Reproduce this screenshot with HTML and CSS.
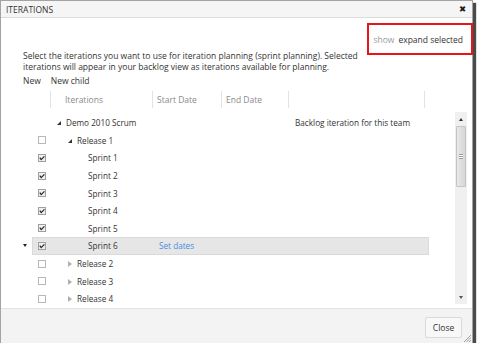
FILE: index.html
```html
<!DOCTYPE html>
<html>
    <head>
        <meta name="viewport" content="width=device-width, initial-scale=1">
        <link rel="stylesheet" href="styles.css">
    </head>
    <body>
        <div class="dialog">
            <div class="titlebar">
                <span class="title">ITERATIONS</span>
                <span class="close-x">&#x2716;</span>
            </div>
            <div class="content">
                <div class="toolbar">
                    <span class="show-label">show</span>
                    <span class="show-value">expand selected</span>
                </div>
                <p class="intro">Select the iterations you want to use for iteration planning (sprint planning). Selected<br>iterations will appear in your backlog view as iterations available for planning.</p>
                <div class="menu">
                    <span>New</span>
                    <span>New child</span>
                </div>
                <div class="grid-head">
                    <div class="hcell c-ind"></div>
                    <div class="hcell c-chk"></div>
                    <div class="hcell c-iter">Iterations</div>
                    <div class="hcell c-start">Start Date</div>
                    <div class="hcell c-end">End Date</div>
                    <div class="hcell c-extra"></div>
                </div>
                <div class="grid-body">
                    <div class="rows">
                        <div class="row">
                            <div class="c-ind"></div>
                            <div class="row-inner">
                                <div class="c-chk"></div>
                                <div class="c-iter lvl0"><span class="tri open"></span>Demo 2010 Scrum</div>
                                <div class="c-start"></div>
                                <div class="c-end"></div>
                                <div class="c-extra">Backlog iteration for this team</div>
                            </div>
                        </div>
                        <div class="row">
                            <div class="c-ind"></div>
                            <div class="row-inner">
                                <div class="c-chk"><span class="box"></span></div>
                                <div class="c-iter lvl1"><span class="tri open"></span>Release 1</div>
                                <div class="c-start"></div>
                                <div class="c-end"></div>
                                <div class="c-extra"></div>
                            </div>
                        </div>
                        <div class="row">
                            <div class="c-ind"></div>
                            <div class="row-inner">
                                <div class="c-chk"><span class="box checked"></span></div>
                                <div class="c-iter lvl2">Sprint 1</div>
                                <div class="c-start"></div>
                                <div class="c-end"></div>
                                <div class="c-extra"></div>
                            </div>
                        </div>
                        <div class="row">
                            <div class="c-ind"></div>
                            <div class="row-inner">
                                <div class="c-chk"><span class="box checked"></span></div>
                                <div class="c-iter lvl2">Sprint 2</div>
                                <div class="c-start"></div>
                                <div class="c-end"></div>
                                <div class="c-extra"></div>
                            </div>
                        </div>
                        <div class="row">
                            <div class="c-ind"></div>
                            <div class="row-inner">
                                <div class="c-chk"><span class="box checked"></span></div>
                                <div class="c-iter lvl2">Sprint 3</div>
                                <div class="c-start"></div>
                                <div class="c-end"></div>
                                <div class="c-extra"></div>
                            </div>
                        </div>
                        <div class="row">
                            <div class="c-ind"></div>
                            <div class="row-inner">
                                <div class="c-chk"><span class="box checked"></span></div>
                                <div class="c-iter lvl2">Sprint 4</div>
                                <div class="c-start"></div>
                                <div class="c-end"></div>
                                <div class="c-extra"></div>
                            </div>
                        </div>
                        <div class="row">
                            <div class="c-ind"></div>
                            <div class="row-inner">
                                <div class="c-chk"><span class="box checked"></span></div>
                                <div class="c-iter lvl2">Sprint 5</div>
                                <div class="c-start"></div>
                                <div class="c-end"></div>
                                <div class="c-extra"></div>
                            </div>
                        </div>
                        <div class="row">
                            <div class="c-ind"><span class="current"></span></div>
                            <div class="row-inner selected">
                                <div class="c-chk"><span class="box checked"></span></div>
                                <div class="c-iter lvl2">Sprint 6</div>
                                <div class="c-start"><span class="link">Set dates</span></div>
                                <div class="c-end"></div>
                                <div class="c-extra"></div>
                            </div>
                        </div>
                        <div class="row">
                            <div class="c-ind"></div>
                            <div class="row-inner">
                                <div class="c-chk"><span class="box"></span></div>
                                <div class="c-iter lvl1"><span class="tri closed"></span>Release 2</div>
                                <div class="c-start"></div>
                                <div class="c-end"></div>
                                <div class="c-extra"></div>
                            </div>
                        </div>
                        <div class="row">
                            <div class="c-ind"></div>
                            <div class="row-inner">
                                <div class="c-chk"><span class="box"></span></div>
                                <div class="c-iter lvl1"><span class="tri closed"></span>Release 3</div>
                                <div class="c-start"></div>
                                <div class="c-end"></div>
                                <div class="c-extra"></div>
                            </div>
                        </div>
                        <div class="row">
                            <div class="c-ind"></div>
                            <div class="row-inner">
                                <div class="c-chk"><span class="box"></span></div>
                                <div class="c-iter lvl1"><span class="tri closed"></span>Release 4</div>
                                <div class="c-start"></div>
                                <div class="c-end"></div>
                                <div class="c-extra"></div>
                            </div>
                        </div>
                    </div>
                    <!-- vertical scrollbar -->
                    <div class="scrollbar">
                        <span class="arrow up"></span>
                        <div class="thumb"><span class="grip-lines"></span></div>
                        <span class="arrow down"></span>
                    </div>
                </div>
            </div>
            <div class="footer">
                <button type="button" class="button-close">Close</button>
                <svg class="resize" width="7" height="7" viewBox="0 0 7 7">
                    <path d="M7 0 L0 7 M7 2.5 L2.5 7 M7 5 L5 7" stroke="#888" stroke-width="0.8"/>
                </svg>
            </div>
            <!-- red annotation box drawn over the screenshot -->
            <div class="callout"></div>
        </div>
    </body>
</html>
```

FILE: styles.css
```css
/* Base */
* {
    box-sizing: border-box;
}
body {
    margin: 0;
    background-color: #FFFFFF;
    font-family: "Open Sans", "Noto Sans", sans-serif;
    font-size: 8.5px;
    color: #333333;
}
p {
    margin: 0;
}

/* Dialog frame */
.dialog {
    position: relative;
    width: 473px;
    height: 343px;
    border: 1px solid #A3A3A3;
    background-color: #FFFFFF;
    box-shadow: 3px 3px 1px #4A4A4A;
    display: flex;
    flex-direction: column;
}
.titlebar {
    height: 17px;
    flex: none;
    display: flex;
    align-items: center;
    justify-content: space-between;
    padding: 0 6px 0 5px;
    background-color: #F5F5F5;
    border-bottom: 1px solid #DCDCDC;
}
.title {
    font-size: 8.5px;
    color: #333333;
}
.close-x {
    font-family: "DejaVu Sans", sans-serif;
    font-size: 8.5px;
    font-weight: bold;
    color: #1A1A1A;
}

/* Content */
.content {
    flex: 1;
    display: flex;
    flex-direction: column;
    padding: 0 5px 0 17px;
}
.toolbar {
    margin-top: 15px;
    height: 12px;
    display: flex;
    align-items: center;
    justify-content: flex-end;
    gap: 4px;
    padding-right: 4px;
}
.show-label {
    color: #9A9A9A;
}
.show-value {
    color: #333333;
}
.intro {
    margin-top: 5px;
    padding-left: 5px;
    line-height: 11px;
    height: 22px;
}
.menu {
    margin-top: 3px;
    height: 11px;
    line-height: 11px;
    padding-left: 5px;
    display: flex;
    gap: 10px;
}

/* Grid */
.grid-head {
    margin-top: 5px;
    height: 18px;
    display: flex;
}
.hcell {
    height: 17px;
    line-height: 17px;
    color: #8A8A8A;
    border-right: 1px solid #E3E3E3;
    padding-left: 4px;
    white-space: nowrap;
}
.hcell.c-ind {
    border-right: none;
}
.hcell.c-iter {
    padding-left: 14px;
}
.c-ind {
    width: 14px;
    flex: none;
    display: flex;
    align-items: center;
    justify-content: center;
}
.c-chk {
    width: 19px;
    flex: none;
}
.c-iter {
    width: 102px;
    flex: none;
}
.c-start {
    width: 69px;
    flex: none;
}
.c-end {
    width: 67px;
    flex: none;
}
.c-extra {
    width: 136px;
    flex: none;
}
.grid-body {
    flex: 1;
    display: flex;
}
.rows {
    width: 411px;
    padding-top: 5px;
    font-size: 8.2px;
}
.row {
    height: 17.6px;
    display: flex;
}
.row-inner {
    width: 397px;
    display: flex;
    align-items: center;
    white-space: nowrap;
}
.row-inner > div {
    padding-left: 6px;
}
.row-inner.selected {
    background-color: #E6E6E6;
    box-shadow: inset 0 0 0 1px #DADADA;
}
.row-inner .c-chk {
    display: flex;
    align-items: center;
}
.c-iter.lvl0 {
    padding-left: 15px;
}
.c-iter.lvl1 {
    padding-left: 26px;
}
.c-iter.lvl2 {
    padding-left: 37px;
}
.tri {
    display: inline-block;
    margin-left: -9px;
    margin-right: 5px;
    vertical-align: 1px;
}
.tri.open {
    border-left: 4px solid transparent;
    border-bottom: 4px solid #333333;
    width: 0;
    height: 0;
}
.tri.closed {
    width: 0;
    height: 0;
    border-top: 3px solid transparent;
    border-bottom: 3px solid transparent;
    border-left: 4px solid #B0B0B0;
    vertical-align: 0;
}
.box {
    display: inline-block;
    width: 8px;
    height: 8px;
    border: 1px solid #B8B8B8;
    background-color: #FFFFFF;
}
.box.checked {
    border-color: #A0A0A0;
    background-color: #F0F0F0;
    background-image: url("data:image/svg+xml;utf8,<svg xmlns='http://www.w3.org/2000/svg' width='6' height='6' viewBox='0 0 6 6'><path d='M0.8 2.6 L2.2 4.6 L5.4 1.4' fill='none' stroke='%23222' stroke-width='1.2'/></svg>");
    background-repeat: no-repeat;
    background-position: center;
}
.current {
    width: 0;
    height: 0;
    border-left: 2.5px solid transparent;
    border-right: 2.5px solid transparent;
    border-top: 3px solid #222222;
}
.link {
    color: #4A8CE0;
}

/* Scrollbar */
.scrollbar {
    margin-left: 26px;
    margin-top: 3px;
    width: 12px;
    height: 192px;
    background-color: #F0F0F0;
    display: flex;
    flex-direction: column;
    align-items: center;
}
.arrow {
    flex: none;
    width: 0;
    height: 0;
    border-left: 2.5px solid transparent;
    border-right: 2.5px solid transparent;
}
.arrow.up {
    margin-top: 6px;
    border-bottom: 3px solid #333333;
}
.arrow.down {
    margin-top: auto;
    margin-bottom: 5px;
    border-top: 3px solid #555555;
}
.thumb {
    margin-top: 5px;
    width: 10px;
    height: 61px;
    border: 1px solid #C4C4C4;
    border-radius: 1px;
    background: linear-gradient(to right, #E8E8E8, #D6D6D6);
    display: flex;
    align-items: center;
    justify-content: center;
}
.grip-lines {
    width: 4px;
    height: 5px;
    border-top: 1px solid #9A9A9A;
    border-bottom: 1px solid #9A9A9A;
    background: linear-gradient(#FFFFFF 0 40%, #9A9A9A 40% 60%, #FFFFFF 60%);
}

/* Footer */
.footer {
    height: 35px;
    flex: none;
    position: relative;
    display: flex;
    justify-content: flex-end;
    align-items: flex-start;
    padding: 8px 10px 0 0;
    background-color: #F3F3F3;
    border-top: 1px solid #E3E3E3;
}
.button-close {
    width: 37px;
    height: 21px;
    padding: 0;
    font-family: "Open Sans", "Noto Sans", sans-serif;
    font-size: 8.5px;
    color: #333333;
    background-color: #F8F8F8;
    border: 1px solid #DADADA;
    border-radius: 2px;
}
.resize {
    position: absolute;
    right: 1px;
    bottom: 1px;
}

/* Annotation box */
.callout {
    position: absolute;
    left: 366px;
    top: 22px;
    width: 106px;
    height: 32px;
    border: 2px solid #E8131B;
}
```
